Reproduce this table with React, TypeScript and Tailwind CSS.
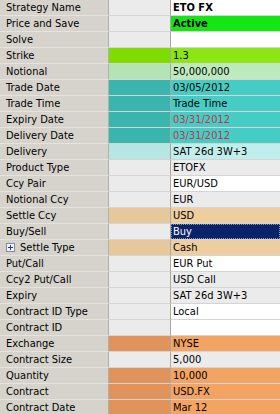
import type { ReactNode } from 'react';

type Row = {
  label: string;
  value?: string;
  mid: string; // middle (indicator) cell background class
  val: string; // value cell background class
  text?: string; // value text classes
  expand?: boolean;
  selected?: boolean;
};

const WHITE = 'bg-white';
const GRAY = 'bg-[#ebebeb]';

const ROWS: Row[] = [
  { label: 'Strategy Name', value: 'ETO FX', mid: GRAY, val: WHITE, text: 'font-bold' },
  { label: 'Price and Save', value: 'Active', mid: GRAY, val: 'bg-[#14e614]', text: 'font-bold' },
  { label: 'Solve', mid: GRAY, val: WHITE },
  { label: 'Strike', value: '1.3', mid: 'bg-[#7edc00]', val: 'bg-[#8ce614]' },
  { label: 'Notional', value: '50,000,000', mid: 'bg-[#b4e4b4]', val: 'bg-[#bdeabd]' },
  { label: 'Trade Date', value: '03/05/2012', mid: 'bg-[#3ab5ad]', val: 'bg-[#45ccc4]' },
  { label: 'Trade Time', value: 'Trade Time', mid: 'bg-[#3ab5ad]', val: 'bg-[#45ccc4]' },
  { label: 'Expiry Date', value: '03/31/2012', mid: 'bg-[#3ab5ad]', val: 'bg-[#45ccc4]', text: 'text-[#c8334b]' },
  { label: 'Delivery Date', value: '03/31/2012', mid: 'bg-[#3ab5ad]', val: 'bg-[#45ccc4]', text: 'text-[#c8334b]' },
  { label: 'Delivery', value: 'SAT 26d 3W+3', mid: 'bg-[#b6e6e4]', val: 'bg-[#c0eeec]' },
  { label: 'Product Type', value: 'ETOFX', mid: GRAY, val: GRAY },
  { label: 'Ccy Pair', value: 'EUR/USD', mid: GRAY, val: WHITE },
  { label: 'Notional Ccy', value: 'EUR', mid: GRAY, val: GRAY },
  { label: 'Settle Ccy', value: 'USD', mid: 'bg-[#e6c89a]', val: 'bg-[#eecd9e]' },
  { label: 'Buy/Sell', value: 'Buy', mid: GRAY, val: 'bg-[#0a246a]', selected: true },
  { label: 'Settle Type', value: 'Cash', mid: 'bg-[#e6c89a]', val: 'bg-[#eecd9e]', expand: true },
  { label: 'Put/Call', value: 'EUR Put', mid: GRAY, val: WHITE },
  { label: 'Ccy2 Put/Call', value: 'USD Call', mid: GRAY, val: GRAY },
  { label: 'Expiry', value: 'SAT 26d 3W+3', mid: GRAY, val: GRAY },
  { label: 'Contract ID Type', value: 'Local', mid: GRAY, val: WHITE },
  { label: 'Contract ID', mid: GRAY, val: WHITE },
  { label: 'Exchange', value: 'NYSE', mid: 'bg-[#e0935a]', val: 'bg-[#f4a462]' },
  { label: 'Contract Size', value: '5,000', mid: GRAY, val: GRAY },
  { label: 'Quantity', value: '10,000', mid: 'bg-[#e0935a]', val: 'bg-[#f4a462]' },
  { label: 'Contract', value: 'USD.FX', mid: 'bg-[#e0935a]', val: 'bg-[#f4a462]' },
  { label: 'Contract Date', value: 'Mar 12', mid: 'bg-[#e0935a]', val: 'bg-[#f4a462]' },
];

function ExpandBox() {
  return (
    <svg width="9" height="9" viewBox="0 0 9 9" className="mr-[5px] shrink-0">
      <rect x="0.5" y="0.5" width="8" height="8" fill="#f4f6fa" stroke="#7b8aa8" />
      <path d="M2 4.5h5M4.5 2v5" stroke="#1c3a8c" strokeWidth="1" />
    </svg>
  );
}

function Cell({ className, children }: { className: string; children?: ReactNode }) {
  return <div className={`flex h-full items-center ${className}`}>{children}</div>;
}

export default function App() {
  return (
    <div
      className="h-[414px] w-[280px] overflow-hidden bg-white text-[11px] leading-none text-black"
      style={{ fontFamily: '"DejaVu Sans Condensed", "Liberation Sans", sans-serif' }}
    >
      {ROWS.map((r) => (
        <div key={r.label} className="flex h-[16px]">
          <Cell className="w-[109px] shrink-0 border-r border-b border-r-[#b4b0a8] border-b-[#e6e3de] bg-[#d6d3cc] pl-[6px]">
            {r.expand && <ExpandBox />}
            <span className="whitespace-nowrap">{r.label}</span>
          </Cell>
          <Cell className={`w-[62px] shrink-0 border-r border-b border-r-[#a8a8a8] border-b-[#d4d4d4] ${r.mid}`} />
          <Cell className={`flex-1 border-b border-b-[#d4d4d4] ${r.val}`}>
            {r.selected ? (
              <span className="flex h-full w-full items-center border border-dotted border-[#8b9ac4] pl-[1px] text-white">
                {r.value}
              </span>
            ) : (
              <span className={`whitespace-nowrap pl-[2px] ${r.text ?? ''}`}>{r.value}</span>
            )}
          </Cell>
        </div>
      ))}
    </div>
  );
}
